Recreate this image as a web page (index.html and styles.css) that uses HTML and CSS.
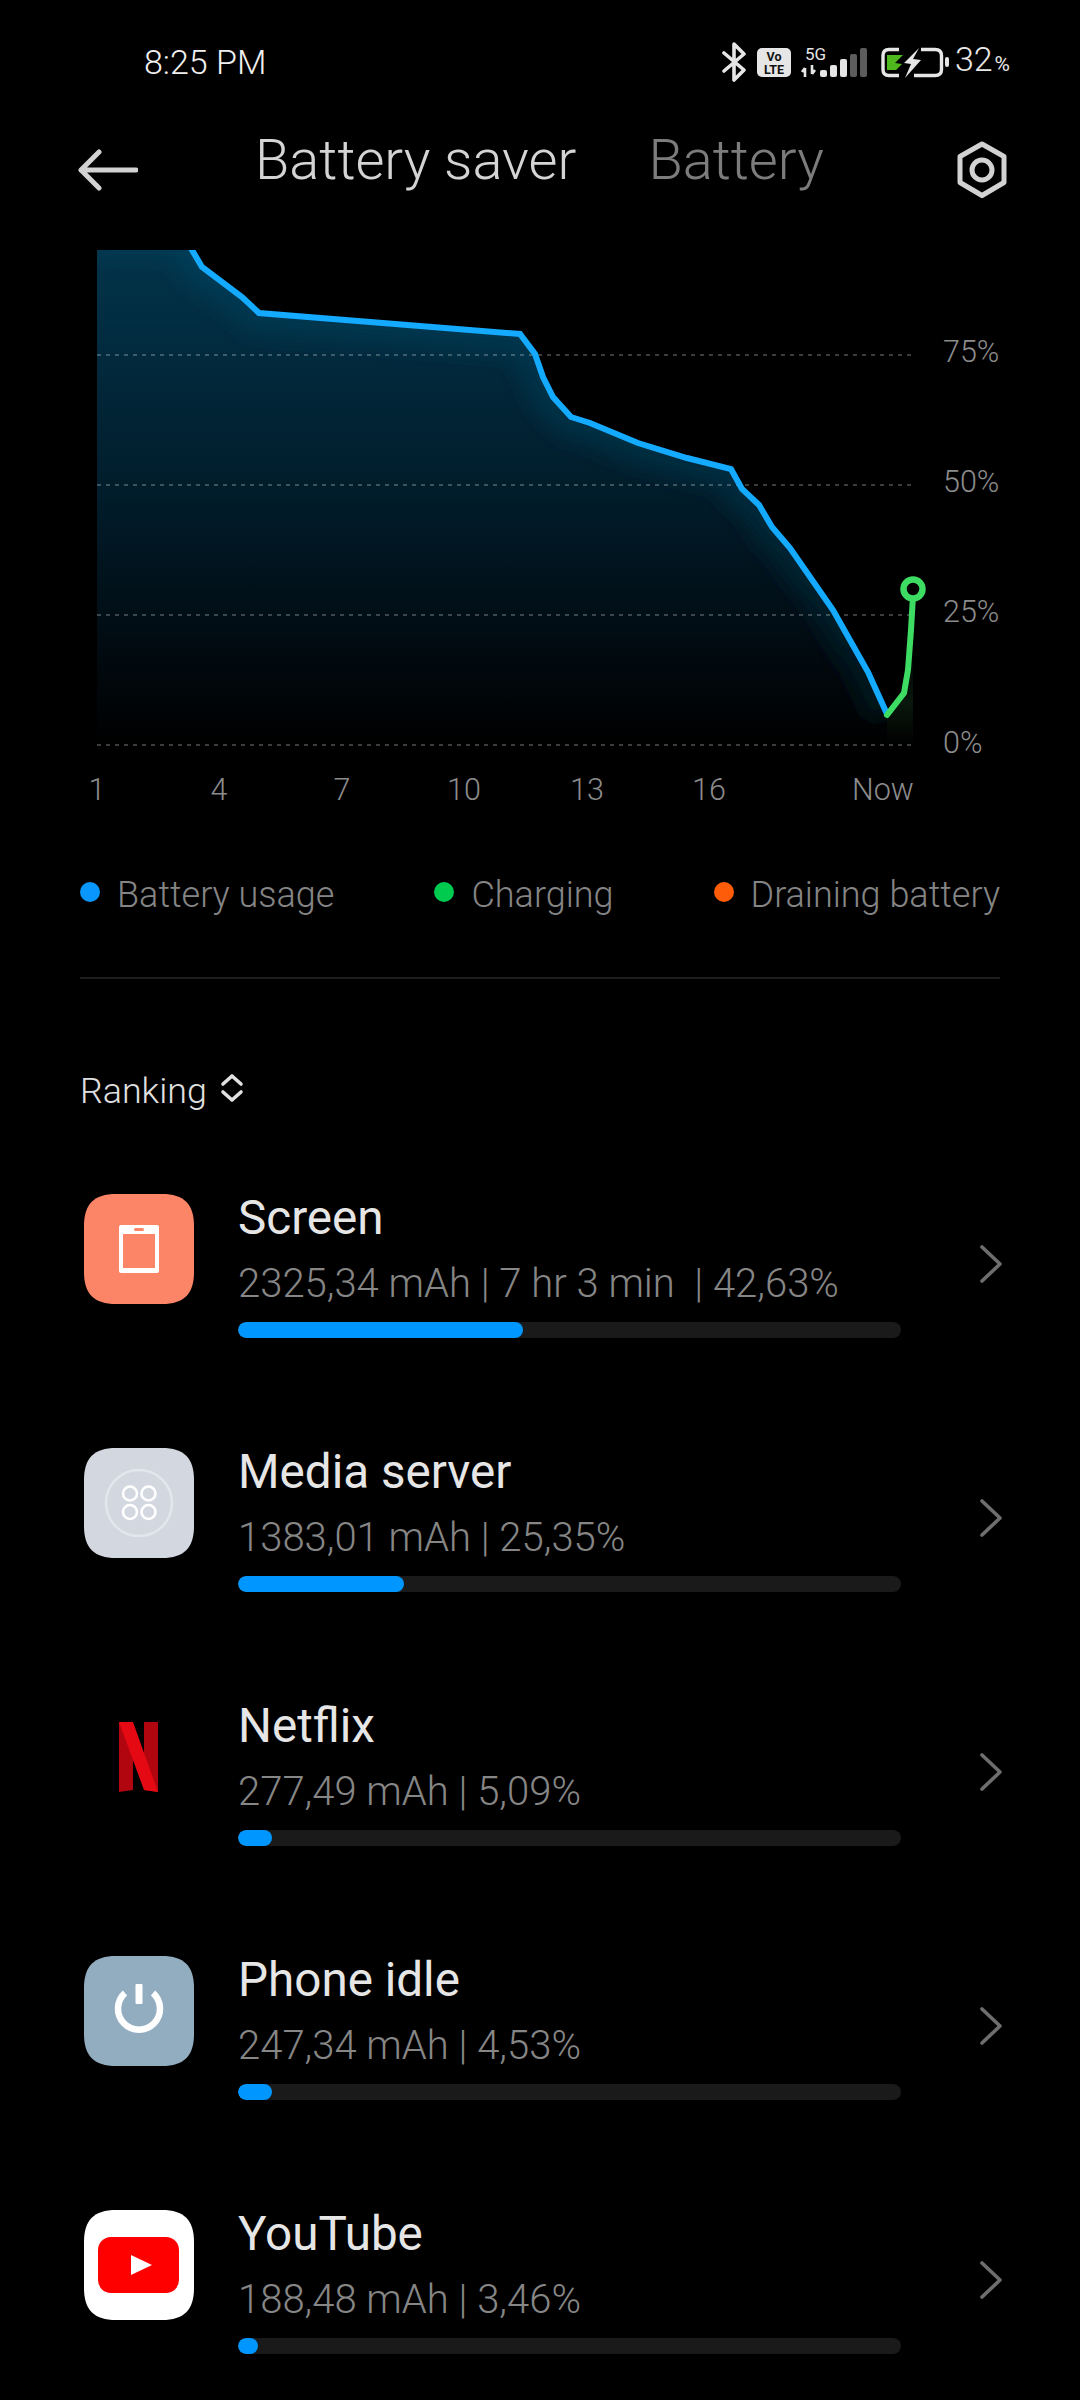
FILE: index.html
```html
<!DOCTYPE html>
<html lang="en">
<head>
<meta charset="utf-8">
<title>Battery saver</title>
<link rel="stylesheet" href="styles.css">
</head>
<body>
<div class="page">
  <div class="status">
    <span class="time">8:25 PM</span>
    <div class="status-right">
      <svg class="status-icons" viewBox="715 36 240 44" width="240" height="44">
        <path d="M724 51 L744 68 L734 78 L734 42 L744 52 L724 69" fill="none" stroke="#e6e6e6" stroke-width="3.6" stroke-linejoin="round" stroke-linecap="round"/>
        <rect x="757" y="46" width="34" height="29" rx="5" fill="#e6e6e6"/>
        <text class="volte" x="774" y="59">Vo</text>
        <text class="volte" x="774" y="72">LTE</text>
        <text class="fiveg" x="805" y="58">5G</text>
        <path d="M805 66 V75 M802 70 L805 66 M812 63 V72 M812 72 L815 68" stroke="#e6e6e6" stroke-width="2.6" fill="none"/>
        <rect x="820" y="68" width="7" height="7" rx="2" fill="#e6e6e6"/>
        <rect x="830" y="63" width="7" height="12" rx="2" fill="#e6e6e6"/>
        <rect x="840" y="57" width="7" height="18" rx="2" fill="#e6e6e6"/>
        <rect x="850" y="52" width="7" height="23" rx="2" fill="#5c5c5c"/>
        <rect x="860" y="46" width="7" height="29" rx="2" fill="#5c5c5c"/>
        <path d="M899 47.5 H889 Q883 47.5 883 53.5 V67.5 Q883 73.5 889 73.5 H899" fill="none" stroke="#e6e6e6" stroke-width="3.4"/>
        <path d="M921 47.5 H935 Q941.5 47.5 941.5 53.5 V67.5 Q941.5 73.5 935 73.5 H914" fill="none" stroke="#e6e6e6" stroke-width="3.4"/>
        <path d="M887 53 H903 L895 61 L902 62 L896 68 H887 Z" fill="#4fb81c"/>
        <path d="M919 46 L904 61 L911 62 L905 76 L921 58 L913 57 Z" fill="#e6e6e6"/>
        <rect x="945" y="55" width="4" height="10" rx="2" fill="#e6e6e6"/>
      </svg>
      <span class="pct">32<small class="pct-sign">%</small></span>
    </div>
  </div>

  <header class="header">
    <svg class="back" viewBox="0 0 60 44" width="60" height="44">
      <path d="M21 4 L3 22 L21 40 M3 22 H58" fill="none" stroke="#d2d2d2" stroke-width="5" stroke-linecap="round" stroke-linejoin="round"/>
    </svg>
    <div class="tabs">
      <span class="tab active">Battery saver</span>
      <span class="tab">Battery</span>
    </div>
    <svg class="gear" viewBox="0 0 52 58" width="52" height="58">
      <path d="M26 3 L48 15.5 V41.5 L26 54.5 L4 41.5 V15.5 Z" fill="none" stroke="#d2d2d2" stroke-width="5" stroke-linejoin="round"/>
      <circle cx="26" cy="29" r="10" fill="none" stroke="#d2d2d2" stroke-width="5"/>
    </svg>
  </header>

  <svg class="chart" viewBox="0 250 1080 560" width="1080" height="560">
    <defs>
      <linearGradient id="area" gradientUnits="userSpaceOnUse" x1="0" y1="250" x2="0" y2="745">
        <stop offset="0" stop-color="#02344b"/>
        <stop offset="0.5" stop-color="#011c2a"/>
        <stop offset="0.8" stop-color="#010b11"/>
        <stop offset="1" stop-color="#000"/>
      </linearGradient>
      <linearGradient id="glow" gradientUnits="userSpaceOnUse" x1="0" y1="250" x2="0" y2="720">
        <stop offset="0" stop-color="#053c56"/>
        <stop offset="0.5" stop-color="#032b3d"/>
        <stop offset="1" stop-color="#011218"/>
      </linearGradient>
      <linearGradient id="greenfade" gradientUnits="userSpaceOnUse" x1="0" y1="640" x2="0" y2="745">
        <stop offset="0" stop-color="#000"/>
        <stop offset="0.6" stop-color="#0b1d10"/>
        <stop offset="1" stop-color="#000"/>
      </linearGradient>
      <clipPath id="areaclip">
        <path d="M97 250 H192 L202 267 L242 297 L259 313 L520 334 L535 354 L543 377 L553 397 L571 417 L590 423 L638 443 L687 458 L731 469 L742 489 L759 505 L772 527 L790 548 L833 610 L868 672 L887 714 V745 H97 Z"/>
      </clipPath>
      <filter id="blur" x="-10%" y="-10%" width="120%" height="120%">
        <feGaussianBlur stdDeviation="10"/>
      </filter>
    </defs>
    <path d="M97 250 H192 L202 267 L242 297 L259 313 L520 334 L535 354 L543 377 L553 397 L571 417 L590 423 L638 443 L687 458 L731 469 L742 489 L759 505 L772 527 L790 548 L833 610 L868 672 L887 714 V745 H97 Z" fill="url(#area)"/>
    <g clip-path="url(#areaclip)">
      <path d="M97 232 H182 L192 250 L202 267 L242 297 L259 313 L520 334 L535 354 L543 377 L553 397 L571 417 L590 423 L638 443 L687 458 L731 469 L742 489 L759 505 L772 527 L790 548 L833 610 L868 672 L887 714" fill="none" stroke="url(#glow)" stroke-width="40" filter="url(#blur)"/>
    </g>
    <path d="M887 715 L904 693 L908 670 L911 630 L913 589 V745 H887 Z" fill="url(#greenfade)" opacity="0.8"/>
    <path class="grid" d="M97 355 H914 M97 485 H914 M97 615 H914 M97 745 H914"/>
    <path d="M180 230 L192 250 L202 267 L242 297 L259 313 L520 334 L535 354 L543 377 L553 397 L571 417 L590 423 L638 443 L687 458 L731 469 L742 489 L759 505 L772 527 L790 548 L833 610 L868 672 L887 714" fill="none" stroke="#14aaff" stroke-width="6"/>
    <path d="M887 715 L904 693 L908 670 L911 630 L913 596" fill="none" stroke="#3ddc62" stroke-width="6" stroke-linecap="round"/>
    <circle cx="913" cy="589" r="9.5" fill="#000" stroke="#3ddc62" stroke-width="6.5"/>
    <text class="axis" x="943" y="362">75%</text>
    <text class="axis" x="943" y="492">50%</text>
    <text class="axis" x="943" y="622">25%</text>
    <text class="axis" x="943" y="753">0%</text>
    <text class="axis mid" x="97" y="800">1</text>
    <text class="axis mid" x="219" y="800">4</text>
    <text class="axis mid" x="342" y="800">7</text>
    <text class="axis mid" x="464" y="800">10</text>
    <text class="axis mid" x="587" y="800">13</text>
    <text class="axis mid" x="709" y="800">16</text>
    <text class="axis mid" x="883" y="800">Now</text>
  </svg>

  <div class="legend">
    <span class="legend-item"><i class="dot dot-blue"></i>Battery usage</span>
    <span class="legend-item"><i class="dot dot-green"></i>Charging</span>
    <span class="legend-item"><i class="dot dot-orange"></i>Draining battery</span>
  </div>

  <div class="divider"></div>

  <div class="ranking">
    <span>Ranking</span>
    <svg viewBox="0 0 24 30" width="24" height="30">
      <path d="M3 11 L12 3 L21 11 M3 19 L12 27 L21 19" fill="none" stroke="#e0e0e0" stroke-width="3.6" stroke-linecap="round" stroke-linejoin="round"/>
    </svg>
  </div>

  <section class="rows">
    <div class="row">
      <svg class="icon" viewBox="0 0 110 110" width="110" height="110">
        <path d="M32 0 H78 C100 0 110 10 110 32 V78 C110 100 100 110 78 110 H32 C10 110 0 100 0 78 V32 C0 10 10 0 32 0 Z" fill="#fd8567"/>
        <rect x="35" y="31" width="40" height="48" rx="2" fill="#fff"/>
        <rect x="39" y="40" width="32" height="34" fill="#fd8567"/>
        <rect x="50" y="34" width="10" height="3" rx="1.5" fill="#fd8567"/>
      </svg>
      <div class="info">
        <div class="title">Screen</div>
        <div class="sub">2325,34 mAh | 7 hr 3 min&nbsp; | 42,63%</div>
        <div class="track"><div class="fill" style="width:43%"></div></div>
      </div>
      <svg class="chev" viewBox="0 0 24 40" width="24" height="40"><path d="M2 3 L20 20 L2 37" fill="none" stroke="#6e6e6e" stroke-width="3.6" stroke-linecap="round" stroke-linejoin="round"/></svg>
    </div>
    <div class="row">
      <svg class="icon" viewBox="0 0 110 110" width="110" height="110">
        <path d="M32 0 H78 C100 0 110 10 110 32 V78 C110 100 100 110 78 110 H32 C10 110 0 100 0 78 V32 C0 10 10 0 32 0 Z" fill="#d3d7e0"/>
        <circle cx="55" cy="55" r="33" fill="none" stroke="#e3e6ec" stroke-width="2.5"/>
        <g fill="none" stroke="#fff" stroke-width="2.6">
          <circle cx="46" cy="45.5" r="7"/><circle cx="64.5" cy="45.5" r="7"/>
          <circle cx="46" cy="64" r="7"/><circle cx="64.5" cy="64" r="7"/>
        </g>
      </svg>
      <div class="info">
        <div class="title">Media server</div>
        <div class="sub">1383,01 mAh | 25,35%</div>
        <div class="track"><div class="fill" style="width:25%"></div></div>
      </div>
      <svg class="chev" viewBox="0 0 24 40" width="24" height="40"><path d="M2 3 L20 20 L2 37" fill="none" stroke="#6e6e6e" stroke-width="3.6" stroke-linecap="round" stroke-linejoin="round"/></svg>
    </div>
    <div class="row">
      <svg class="icon" viewBox="0 0 110 110" width="110" height="110">
        <path d="M35 20 H49 V88 L35 90 Z" fill="#b1060f"/>
        <path d="M60 20 H74 V90 L60 88 Z" fill="#b1060f"/>
        <path d="M35 20 H49 L74 90 L60 88 Z" fill="#e50914"/>
      </svg>
      <div class="info">
        <div class="title">Netflix</div>
        <div class="sub">277,49 mAh | 5,09%</div>
        <div class="track"><div class="fill" style="width:5.1%"></div></div>
      </div>
      <svg class="chev" viewBox="0 0 24 40" width="24" height="40"><path d="M2 3 L20 20 L2 37" fill="none" stroke="#6e6e6e" stroke-width="3.6" stroke-linecap="round" stroke-linejoin="round"/></svg>
    </div>
    <div class="row">
      <svg class="icon" viewBox="0 0 110 110" width="110" height="110">
        <path d="M32 0 H78 C100 0 110 10 110 32 V78 C110 100 100 110 78 110 H32 C10 110 0 100 0 78 V32 C0 10 10 0 32 0 Z" fill="#93adc0"/>
        <path d="M41 37 A21 21 0 1 0 69 37" fill="none" stroke="#fff" stroke-width="6.5" stroke-linecap="butt"/>
        <rect x="51.5" y="28" width="7" height="20" rx="1" fill="#fff"/>
      </svg>
      <div class="info">
        <div class="title">Phone idle</div>
        <div class="sub">247,34 mAh | 4,53%</div>
        <div class="track"><div class="fill" style="width:5.1%"></div></div>
      </div>
      <svg class="chev" viewBox="0 0 24 40" width="24" height="40"><path d="M2 3 L20 20 L2 37" fill="none" stroke="#6e6e6e" stroke-width="3.6" stroke-linecap="round" stroke-linejoin="round"/></svg>
    </div>
    <div class="row">
      <svg class="icon" viewBox="0 0 110 110" width="110" height="110">
        <path d="M32 0 H78 C100 0 110 10 110 32 V78 C110 100 100 110 78 110 H32 C10 110 0 100 0 78 V32 C0 10 10 0 32 0 Z" fill="#fff"/>
        <rect x="14" y="27" width="81" height="56" rx="13" fill="#fe0000"/>
        <path d="M47 45 L68 55 L47 65 Z" fill="#fff"/>
      </svg>
      <div class="info">
        <div class="title">YouTube</div>
        <div class="sub">188,48 mAh | 3,46%</div>
        <div class="track"><div class="fill" style="width:3%"></div></div>
      </div>
      <svg class="chev" viewBox="0 0 24 40" width="24" height="40"><path d="M2 3 L20 20 L2 37" fill="none" stroke="#6e6e6e" stroke-width="3.6" stroke-linecap="round" stroke-linejoin="round"/></svg>
    </div>
  </section>
</div>
</body>
</html>
```
FILE: styles.css
```css
* { box-sizing: border-box; }
html, body { margin: 0; background: #000; }
body { font-family: Roboto, "Noto Sans", sans-serif; color: #fff; }
.page { width: 1080px; height: 2400px; overflow: hidden; background: #000; }

.status { height: 120px; display: flex; align-items: center; justify-content: space-between; padding: 0 70px 0 144px; }
.time { font-size: 34px; font-weight: 300; color: #f0f0f0; line-height: 44px; padding-top: 4px; }
.status-right { display: flex; align-items: center; }
.status-icons { display: block; }
.volte { font: 700 12.5px Roboto, sans-serif; fill: #111; text-anchor: middle; }
.fiveg { font: 400 17px Roboto, sans-serif; fill: #e6e6e6; }
.pct { font-size: 34px; color: #e8e8e8; font-weight: 300; line-height: 44px; padding-top: 2px; }
.pct-sign { font-size: 21px; font-weight: 400; margin-left: 2px; }

.header { height: 100px; display: flex; align-items: center; padding: 0 72px 0 78px; }
.back { display: block; }
.tabs { flex: 1; display: flex; gap: 72px; padding-left: 117px; margin-top: -20px; }
.tab { font-size: 56px; font-weight: 300; color: #7c7c7c; line-height: 70px; }
.tab.active { color: #d4d4d4; }
.gear { display: block; }

.chart { display: block; margin-top: 30px; }
.grid { stroke: rgba(255, 255, 255, 0.32); stroke-width: 1.5; stroke-dasharray: 4 5; fill: none; }
.axis { font: 300 30.5px Roboto, sans-serif; fill: #8c8c8c; }
.mid { text-anchor: middle; }

.legend { height: 60px; margin-top: 55px; padding: 0 80px; display: flex; align-items: center; justify-content: space-between; }
.legend-item { display: flex; align-items: center; gap: 17px; font-size: 36px; font-weight: 300; color: #858585; line-height: 60px; }
.dot { width: 20px; height: 20px; border-radius: 50%; display: block; margin-top: -6px; }
.dot-blue { background: #0a96ff; }
.dot-green { background: #00cb4f; }
.dot-orange { background: #ff5c0a; }

.divider { height: 2px; margin: 52px 80px 0; background: #1e1e1e; }

.ranking { height: 60px; margin-top: 82px; padding-left: 80px; display: flex; align-items: center; gap: 13px; font-size: 35.8px; font-weight: 300; color: #e0e0e0; }
.ranking svg { display: block; margin-top: -6px; }

.rows { margin-top: 17px; }
.row { height: 254px; padding: 56px 76px 0 84px; display: flex; align-items: flex-start; }
.icon { display: block; flex: none; }
.info { width: 663px; margin-left: 44px; margin-top: -6px; }
.title { font-size: 47.6px; font-weight: 400; color: #e6e6e6; line-height: 60px; }
.sub { font-size: 40px; font-weight: 300; color: #868686; line-height: 52px; margin-top: 10px; white-space: nowrap; }
.track { height: 16px; margin-top: 12px; border-radius: 8px; background: #1a1a1a; overflow: hidden; }
.fill { height: 100%; border-radius: 8px; background: #0096ff; }
.chev { display: block; flex: none; margin: 50px 0 0 79px; }
```
